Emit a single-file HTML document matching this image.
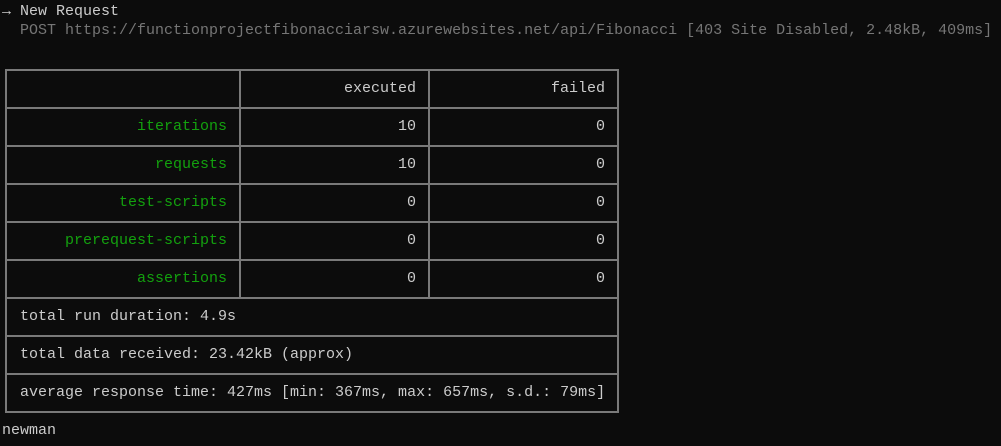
<!DOCTYPE html>
<html><head><style>
body{margin:0;width:1001px;height:446px;background:#0c0c0c;overflow:hidden;font-family:"Liberation Mono",monospace;font-size:15px;color:#cccccc;position:relative}
.t{position:absolute;white-space:pre;line-height:19px}
.h{position:absolute;background:#7a7a7a;height:2px}
.v{position:absolute;background:#7a7a7a;width:2px}
.g{color:#13a10e}
.r{text-align:right}
</style></head><body>
<div class="t" style="left:2px;top:2px">→ New Request</div>
<div class="t" style="left:20px;top:21px;color:#767676">POST https://functionprojectfibonacciarsw.azurewebsites.net/api/Fibonacci [403 Site Disabled, 2.48kB, 409ms]</div>

<div class="h" style="left:6px;width:613px;top:69px"></div>
<div class="h" style="left:6px;width:613px;top:107px"></div>
<div class="h" style="left:6px;width:613px;top:145px"></div>
<div class="h" style="left:6px;width:613px;top:183px"></div>
<div class="h" style="left:6px;width:613px;top:221px"></div>
<div class="h" style="left:6px;width:613px;top:259px"></div>
<div class="h" style="left:6px;width:613px;top:297px"></div>
<div class="h" style="left:6px;width:613px;top:335px"></div>
<div class="h" style="left:6px;width:613px;top:373px"></div>
<div class="h" style="left:6px;width:613px;top:411px"></div>
<div class="v" style="left:5px;top:69px;height:344px"></div>
<div class="v" style="left:617px;top:69px;height:344px"></div>
<div class="v" style="left:239px;top:69px;height:230px"></div>
<div class="v" style="left:428px;top:69px;height:230px"></div>

<div class="t r" style="left:240px;width:176px;top:79px">executed</div>
<div class="t r" style="left:430px;width:175px;top:79px">failed</div>

<div class="t r g" style="left:8px;width:219px;top:117px">iterations</div>
<div class="t r" style="left:240px;width:176px;top:117px">10</div>
<div class="t r" style="left:430px;width:175px;top:117px">0</div>

<div class="t r g" style="left:8px;width:219px;top:155px">requests</div>
<div class="t r" style="left:240px;width:176px;top:155px">10</div>
<div class="t r" style="left:430px;width:175px;top:155px">0</div>

<div class="t r g" style="left:8px;width:219px;top:193px">test-scripts</div>
<div class="t r" style="left:240px;width:176px;top:193px">0</div>
<div class="t r" style="left:430px;width:175px;top:193px">0</div>

<div class="t r g" style="left:8px;width:219px;top:231px">prerequest-scripts</div>
<div class="t r" style="left:240px;width:176px;top:231px">0</div>
<div class="t r" style="left:430px;width:175px;top:231px">0</div>

<div class="t r g" style="left:8px;width:219px;top:269px">assertions</div>
<div class="t r" style="left:240px;width:176px;top:269px">0</div>
<div class="t r" style="left:430px;width:175px;top:269px">0</div>

<div class="t" style="left:20px;top:307px">total run duration: 4.9s</div>
<div class="t" style="left:20px;top:345px">total data received: 23.42kB (approx)</div>
<div class="t" style="left:20px;top:383px">average response time: 427ms [min: 367ms, max: 657ms, s.d.: 79ms]</div>

<div class="t" style="left:2px;top:421px">newman</div>
</body></html>
